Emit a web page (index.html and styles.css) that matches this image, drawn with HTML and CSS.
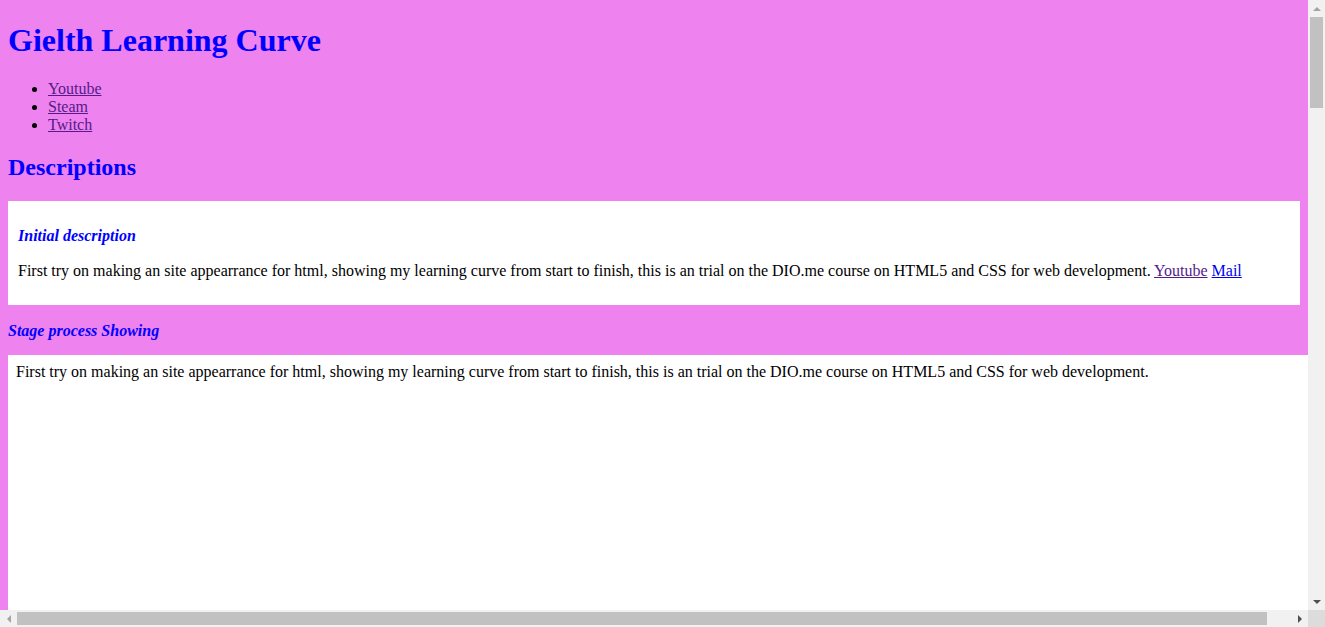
FILE: index.html
```html
<!DOCTYPE html>
<html lang="en">
<head>
<meta charset="utf-8">
<title>Gielth Learning Curve</title>
<link rel="stylesheet" href="styles.css">
</head>
<body>
<main class="viewport">
  <header class="top">
    <h1 class="title">Gielth Learning Curve</h1>
    <ul class="links">
      <li><a class="visited" href="#youtube">Youtube</a></li>
      <li><a class="visited" href="#steam">Steam</a></li>
      <li><a class="visited" href="#twitch">Twitch</a></li>
    </ul>
  </header>
  <h2 class="section-title">Descriptions</h2>
  <section class="card">
    <h4 class="card-title">Initial description</h4>
    <p class="card-text">First try on making an site appearrance for html, showing my learning curve from start to finish, this is an trial on the DIO.me course on HTML5 and CSS for web development. <a class="visited" href="#yt">Youtube</a> <a class="fresh" href="#mail">Mail</a></p>
  </section>
  <h4 class="stage-title">Stage process Showing</h4>
  <div class="stage">First try on making an site appearrance for html, showing my learning curve from start to finish, this is an trial on the DIO.me course on HTML5 and CSS for web development.</div>
</main>
<div class="vbar">
  <div class="sb-btn">
    <svg width="8" height="4" viewBox="0 0 8 4"><polygon points="0,4 4,0 8,4" fill="#a3a3a3"/></svg>
  </div>
  <div class="vtrack"><div class="vthumb"></div></div>
  <div class="sb-btn">
    <svg width="8" height="4" viewBox="0 0 8 4"><polygon points="0,0 8,0 4,4" fill="#505050"/></svg>
  </div>
</div>
<div class="hbar">
  <div class="sb-btn">
    <svg width="4" height="8" viewBox="0 0 4 8"><polygon points="4,0 4,8 0,4" fill="#a3a3a3"/></svg>
  </div>
  <div class="htrack"><div class="hthumb"></div></div>
  <div class="sb-btn">
    <svg width="4" height="8" viewBox="0 0 4 8"><polygon points="0,0 4,4 0,8" fill="#505050"/></svg>
  </div>
</div>
<div class="corner"></div>
</body>
</html>
```
FILE: styles.css
```css
html, body {
  margin: 0;
  height: 100%;
}
body {
  display: grid;
  grid-template-columns: minmax(0, 1fr) 17px;
  grid-template-rows: minmax(0, 1fr) 17px;
  overflow: hidden;
  font-family: "Liberation Serif", "Times New Roman", serif;
  font-size: 16px;
  color: #000;
  background: #ee82ee;
}
.viewport {
  overflow: hidden;
  padding: 8px;
  background: #ee82ee;
}
.title {
  color: #0000ff;
  font-size: 32px;
  margin: 14px 0 21px;
}
.links {
  margin: 16px 0;
  padding-left: 40px;
}
.section-title {
  color: #0000ff;
  font-size: 24px;
  margin: 20px 0;
}
.visited {
  color: #551a8b;
}
.fresh {
  color: #0000ee;
}
.card {
  background: #fff;
  padding: 10px;
}
.card-title {
  color: #0000ff;
  font-style: italic;
  margin: 16px 0 17px;
}
.card-text {
  margin: 0 0 15px;
}
.stage-title {
  color: #0000ff;
  font-style: italic;
  margin: 17px 0 15px;
}
.stage {
  background: #fff;
  width: 100%;
  height: 3480px;
  padding: 8px 17px 8px 8px;
}

/* scrollbars */
.vbar {
  display: flex;
  flex-direction: column;
  background: #f1f1f1;
}
.hbar {
  display: flex;
  background: #f1f1f1;
}
.sb-btn {
  flex: 0 0 17px;
  width: 17px;
  height: 17px;
  display: flex;
  align-items: center;
  justify-content: center;
}
.sb-btn svg {
  display: block;
}
.vtrack {
  flex: 1;
  padding: 0 2px;
}
.vthumb {
  height: 91px;
  background: #c1c1c1;
}
.htrack {
  flex: 1;
  padding: 2px 0;
}
.hthumb {
  width: 1250px;
  height: 100%;
  background: #c1c1c1;
}
.corner {
  background: #dcdcdc;
}
```
